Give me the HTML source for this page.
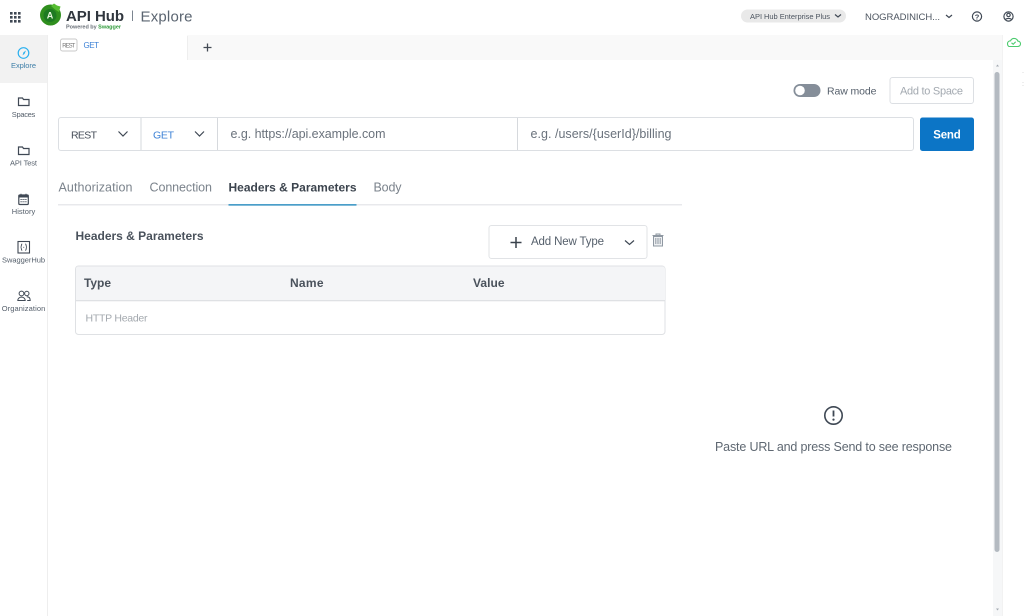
<!DOCTYPE html>
<html><head><meta charset="utf-8"><title>API Hub Explore</title>
<style>
html,body{margin:0;padding:0;width:1024px;height:616px;overflow:hidden;background:#fff}
svg{display:block}
text{font-family:"Liberation Sans",sans-serif;fill:#555f6b}
.i{fill:none;stroke:#3f4854;stroke-width:1.2}
</style></head><body>
<svg width="1024" height="616" viewBox="0 0 1024 616" xmlns="http://www.w3.org/2000/svg">
<rect width="1024" height="616" fill="#fff"/>
<!-- tab bar -->
<rect x="48" y="35" width="954" height="25" fill="#f9f9f9"/>
<rect x="48" y="35" width="139" height="25" fill="#fff"/>
<path d="M187.500 36V60" stroke="#eee" fill="none"/>
<!-- sidebar -->
<rect x="0" y="35" width="48" height="581" fill="#fff"/>
<rect x="0" y="35" width="47" height="48" fill="#f2f2f2"/>
<path d="M47.500 35V616" stroke="#eeeeee"/>
<!-- right rail -->
<path d="M1002.500 35V616" stroke="#f2f2f2"/>
<!-- header -->
<g fill="#3f4854"><rect x="10" y="12" width="2.600" height="2.600"/><rect x="14" y="12" width="2.600" height="2.600"/><rect x="18" y="12" width="2.600" height="2.600"/><rect x="10" y="16" width="2.600" height="2.600"/><rect x="14" y="16" width="2.600" height="2.600"/><rect x="18" y="16" width="2.600" height="2.600"/><rect x="10" y="20" width="2.600" height="2.600"/><rect x="14" y="20" width="2.600" height="2.600"/><rect x="18" y="20" width="2.600" height="2.600"/></g>
<circle cx="50.500" cy="15" r="10.500" fill="#2f8f1e"/>
<path d="M51 6l3-2.500 3 2 3.500 1-1 3.500-.5 2-4-2.500z" fill="#56bd32"/>
<circle cx="50" cy="15.500" r="6.500" fill="#1d7a22"/>
<text x="50" y="18.500" font-size="9" font-weight="700" text-anchor="middle" style="fill:#e8f5df">A</text>
<text x="66" y="21" font-size="15" font-weight="700" textLength="58" lengthAdjust="spacing" style="fill:#30363e">API Hub</text>
<text x="66" y="28.500" font-size="5.500" font-weight="700" textLength="55" lengthAdjust="spacing" style="fill:#6a7078">Powered by <tspan style="fill:#2f9a3a">Swagger</tspan></text>
<path d="M132.500 10.500V21" stroke="#7c8590" stroke-width="1"/>
<text x="140.500" y="21.500" font-size="15" textLength="52" lengthAdjust="spacing" style="fill:#5a6470">Explore</text>
<rect x="741" y="9.500" width="105" height="13" rx="6.500" fill="#e9e9e9"/>
<text x="750" y="19" font-size="7.500" textLength="80" lengthAdjust="spacing" style="fill:#4d5560">API Hub Enterprise Plus</text>
<path d="M835 14.500l3 2.500 3-2.500" class="i"/>
<text x="865" y="20" font-size="9.500" textLength="75" lengthAdjust="spacing" style="fill:#4d5560">NOGRADINICH...</text>
<path d="M946 15l3 2.500 3-2.500" class="i"/>
<circle cx="977" cy="16.500" r="4.600" class="i"/>
<text x="977" y="19.300" font-size="7.500" font-weight="700" text-anchor="middle" style="fill:#3f4854">?</text>
<circle cx="1008.500" cy="16.500" r="4.600" class="i"/>
<circle cx="1008.500" cy="15" r="1.700" class="i"/>
<path d="M1005.300 19.800c1-1.800 5.400-1.800 6.400 0" class="i"/>
<!-- tabs top -->
<rect x="60.500" y="39" width="16.500" height="12" rx="2" fill="#fff" stroke="#c9c9c9"/>
<text x="62.300" y="47.700" font-size="6" textLength="13" lengthAdjust="spacing" style="fill:#777">REST</text>
<text x="83.500" y="48" font-size="8" textLength="15.500" lengthAdjust="spacing" style="fill:#3d82d6">GET</text>
<path d="M207.500 43.500v8M203.500 47.500h8" stroke="#444b55" stroke-width="1.300" fill="none"/>
<!-- sidebar icons -->
<circle cx="23.500" cy="53" r="5.300" fill="none" stroke="#2ab0ef" stroke-width="1.200"/>
<path d="M26 50.500l-1.500 3.400-2 1.500 1-3.200z" fill="#2ab0ef"/>
<text x="23.500" y="68" font-size="7.500" text-anchor="middle" textLength="25" lengthAdjust="spacing" style="fill:#3f7fa8">Explore</text>
<path class="i" d="M18.500 105.500v-7.500h4l1 1.500h5.500v6z"/>
<text x="23.500" y="117" font-size="7.500" text-anchor="middle" textLength="23.500" lengthAdjust="spacing">Spaces</text>
<path class="i" d="M18.500 154.500v-7.500h4l1 1.500h5.500v6z"/>
<text x="23.500" y="165.500" font-size="7.500" text-anchor="middle" textLength="27" lengthAdjust="spacing">API Test</text>
<rect x="18.800" y="195" width="9.500" height="9.500" rx="1" class="i"/>
<rect x="18.800" y="195" width="9.500" height="2.500" fill="#3f4854"/>
<path d="M21 193.800v2M26 193.800v2M20.500 199.500h6.500M20.500 201.800h6.500" stroke="#3f4854" stroke-width="1" stroke-dasharray="1.200 .8" fill="none"/>
<text x="23.500" y="214" font-size="7.500" text-anchor="middle" textLength="23.500" lengthAdjust="spacing">History</text>
<rect x="18" y="241.500" width="11.500" height="11.500" stroke="#3f4854" stroke-width="1.100" fill="none"/>
<path d="M22.200 244c-1.200 0-.6 3-1.500 3.200.9.200.3 3.300 1.500 3.300M25.300 244c1.200 0 .6 3 1.500 3.200-.9.200-.3 3.300-1.500 3.300" fill="none" stroke="#3f4854" stroke-width=".9"/>
<path d="M23.300 247.300h.9" stroke="#3f4854" stroke-width=".9"/>
<text x="23.500" y="262.500" font-size="7.500" text-anchor="middle" textLength="43" lengthAdjust="spacing">SwaggerHub</text>
<circle cx="21.500" cy="293.500" r="2.400" fill="none" stroke="#3f4854" stroke-width="1"/><circle cx="26.800" cy="293.500" r="2.200" fill="none" stroke="#3f4854" stroke-width="1"/>
<path d="M17.800 300.500c0-4.500 7.400-4.500 7.400 0zM26.800 296.800c2 0 3.400 1.300 3.400 3.700h-3" fill="none" stroke="#3f4854" stroke-width="1"/>
<text x="23.500" y="311" font-size="7.500" text-anchor="middle" textLength="43.500" lengthAdjust="spacing">Organization</text>
<!-- raw mode -->
<rect x="793.500" y="84" width="27" height="13" rx="6.500" fill="#858e99"/>
<circle cx="800" cy="90.500" r="4.800" fill="#fff"/>
<text x="827" y="94.500" font-size="10.500" textLength="49.500" lengthAdjust="spacing">Raw mode</text>
<rect x="890" y="77.500" width="83.500" height="26" rx="2.500" fill="#fff" stroke="#dcdfe3"/>
<text x="900" y="94.500" font-size="11" textLength="63" lengthAdjust="spacing" style="fill:#a3a9b0">Add to Space</text>
<!-- request row -->
<rect x="58.500" y="117.500" width="855" height="33" rx="2.500" fill="#fff" stroke="#dcdfe3"/>
<path d="M141 118v32M217.500 118v32M517.500 118v32" stroke="#d6d9dd" fill="none"/>
<text x="71" y="138.500" font-size="10.500" textLength="26" lengthAdjust="spacing" style="fill:#454d58">REST</text>
<path d="M118.500 131.500l4.500 4.500 4.500-4.500M195 131.500l4.500 4.500 4.500-4.500" class="i"/>
<text x="153" y="138.500" font-size="10.500" textLength="21" lengthAdjust="spacing" style="fill:#3d82d6">GET</text>
<text x="230.500" y="138" font-size="12.500" textLength="155" lengthAdjust="spacing" style="fill:#6a727c">e.g. https://api.example.com</text>
<text x="530.500" y="138" font-size="12.500" textLength="141" lengthAdjust="spacing" style="fill:#6a727c">e.g. /users/{userId}/billing</text>
<rect x="920" y="117.500" width="54" height="33.500" rx="2.500" fill="#0c75c6"/>
<text x="947" y="138.500" font-size="11.500" font-weight="700" text-anchor="middle" textLength="27.500" lengthAdjust="spacing" style="fill:#fff">Send</text>
<!-- sub tabs -->
<text x="58.500" y="191.500" font-size="12.500" textLength="74" lengthAdjust="spacing" style="fill:#7b838c">Authorization</text>
<text x="149.500" y="191.500" font-size="12.500" textLength="62.500" lengthAdjust="spacing" style="fill:#7b838c">Connection</text>
<text x="228.500" y="191.500" font-size="12" font-weight="700" textLength="128" lengthAdjust="spacing" style="fill:#3c444e">Headers &amp; Parameters</text>
<text x="373.500" y="191.500" font-size="12.500" textLength="28" lengthAdjust="spacing" style="fill:#7b838c">Body</text>
<rect x="58" y="204" width="624" height="1.500" fill="#e8e9ec"/>
<rect x="228.500" y="204" width="128" height="1.700" fill="#4a9ec9"/>
<!-- section -->
<text x="75.500" y="240" font-size="12" font-weight="700" textLength="128" lengthAdjust="spacing" style="fill:#4a525c">Headers &amp; Parameters</text>
<rect x="489" y="225.500" width="158" height="33" rx="2.500" fill="#fff" stroke="#e1e3e6"/>
<path d="M516 237v11M510.500 242.500h11" stroke="#3a424c" stroke-width="1.500" fill="none"/>
<text x="531" y="245" font-size="11.500" textLength="73" lengthAdjust="spacing">Add New Type</text>
<path d="M625 240.500l4.500 4 4.500-4" class="i"/>
<path d="M653.500 236.500h9v9.500h-9zM652.500 235.500h11M656 235.500v-1.500h4v1.500M655.800 238v6M658 238v6M660.200 238v6" fill="#eef0f2" stroke="#8f98a2" stroke-width="1"/>
<!-- table -->
<rect x="75.500" y="266" width="589.500" height="68.500" rx="3" fill="#fff" stroke="#dfe1e4"/>
<path d="M76 300v-31a2.500 2.500 0 0 1 2.500-2.500h584a2.500 2.500 0 0 1 2.500 2.500v31z" fill="#f4f5f7"/>
<rect x="76" y="300" width="589" height="1.300" fill="#dfe1e4"/>
<text x="84" y="287" font-size="12" font-weight="700" textLength="27" lengthAdjust="spacing" style="fill:#4a525c">Type</text>
<text x="290" y="287" font-size="12" font-weight="700" textLength="33.500" lengthAdjust="spacing" style="fill:#4a525c">Name</text>
<text x="473" y="287" font-size="12" font-weight="700" textLength="31.500" lengthAdjust="spacing" style="fill:#4a525c">Value</text>
<text x="85.500" y="321.500" font-size="10.500" textLength="62" lengthAdjust="spacing" style="fill:#a3a8ae">HTTP Header</text>
<!-- response -->
<circle cx="833.500" cy="415.500" r="8.700" fill="none" stroke="#3f4854" stroke-width="1.600"/>
<path d="M833.500 410.500v6" stroke="#3f4854" stroke-width="1.800"/>
<circle cx="833.500" cy="419.600" r="1.100" fill="#3f4854"/>
<text x="715" y="451" font-size="12.500" textLength="237" lengthAdjust="spacing" style="fill:#5f6872">Paste URL and press Send to see response</text>
<!-- scrollbar -->
<rect x="993" y="60" width="9" height="556" fill="#f6f7f8"/>
<rect x="994.500" y="72" width="5" height="480" rx="2.500" fill="#b4bac1"/>
<path d="M996 66.500l1.500-2 1.500 2zM996 608.500l1.500 2 1.500-2z" fill="#a5abb2"/>
<!-- cloud -->
<path d="M1009 46.500h8.500c2 0 3-1.300 3-2.700 0-1.600-1.200-2.600-2.700-2.700-.6-1.700-2-2.700-3.700-2.700-1.800 0-3 1-3.500 2.400-1.800 0-3.100 1.200-3.100 2.900 0 1.600 1 2.800 1.500 2.800z" fill="none" stroke="#4ccb6e" stroke-width="1.100"/>
<path d="M1011.500 42.800l1.700 1.500 2.500-2.600" fill="none" stroke="#4ccb6e" stroke-width="1.100"/>
<path d="M1023 72v1M1023 82v1M1023 85v1" stroke="#ddd"/>
</svg>
</body></html>
